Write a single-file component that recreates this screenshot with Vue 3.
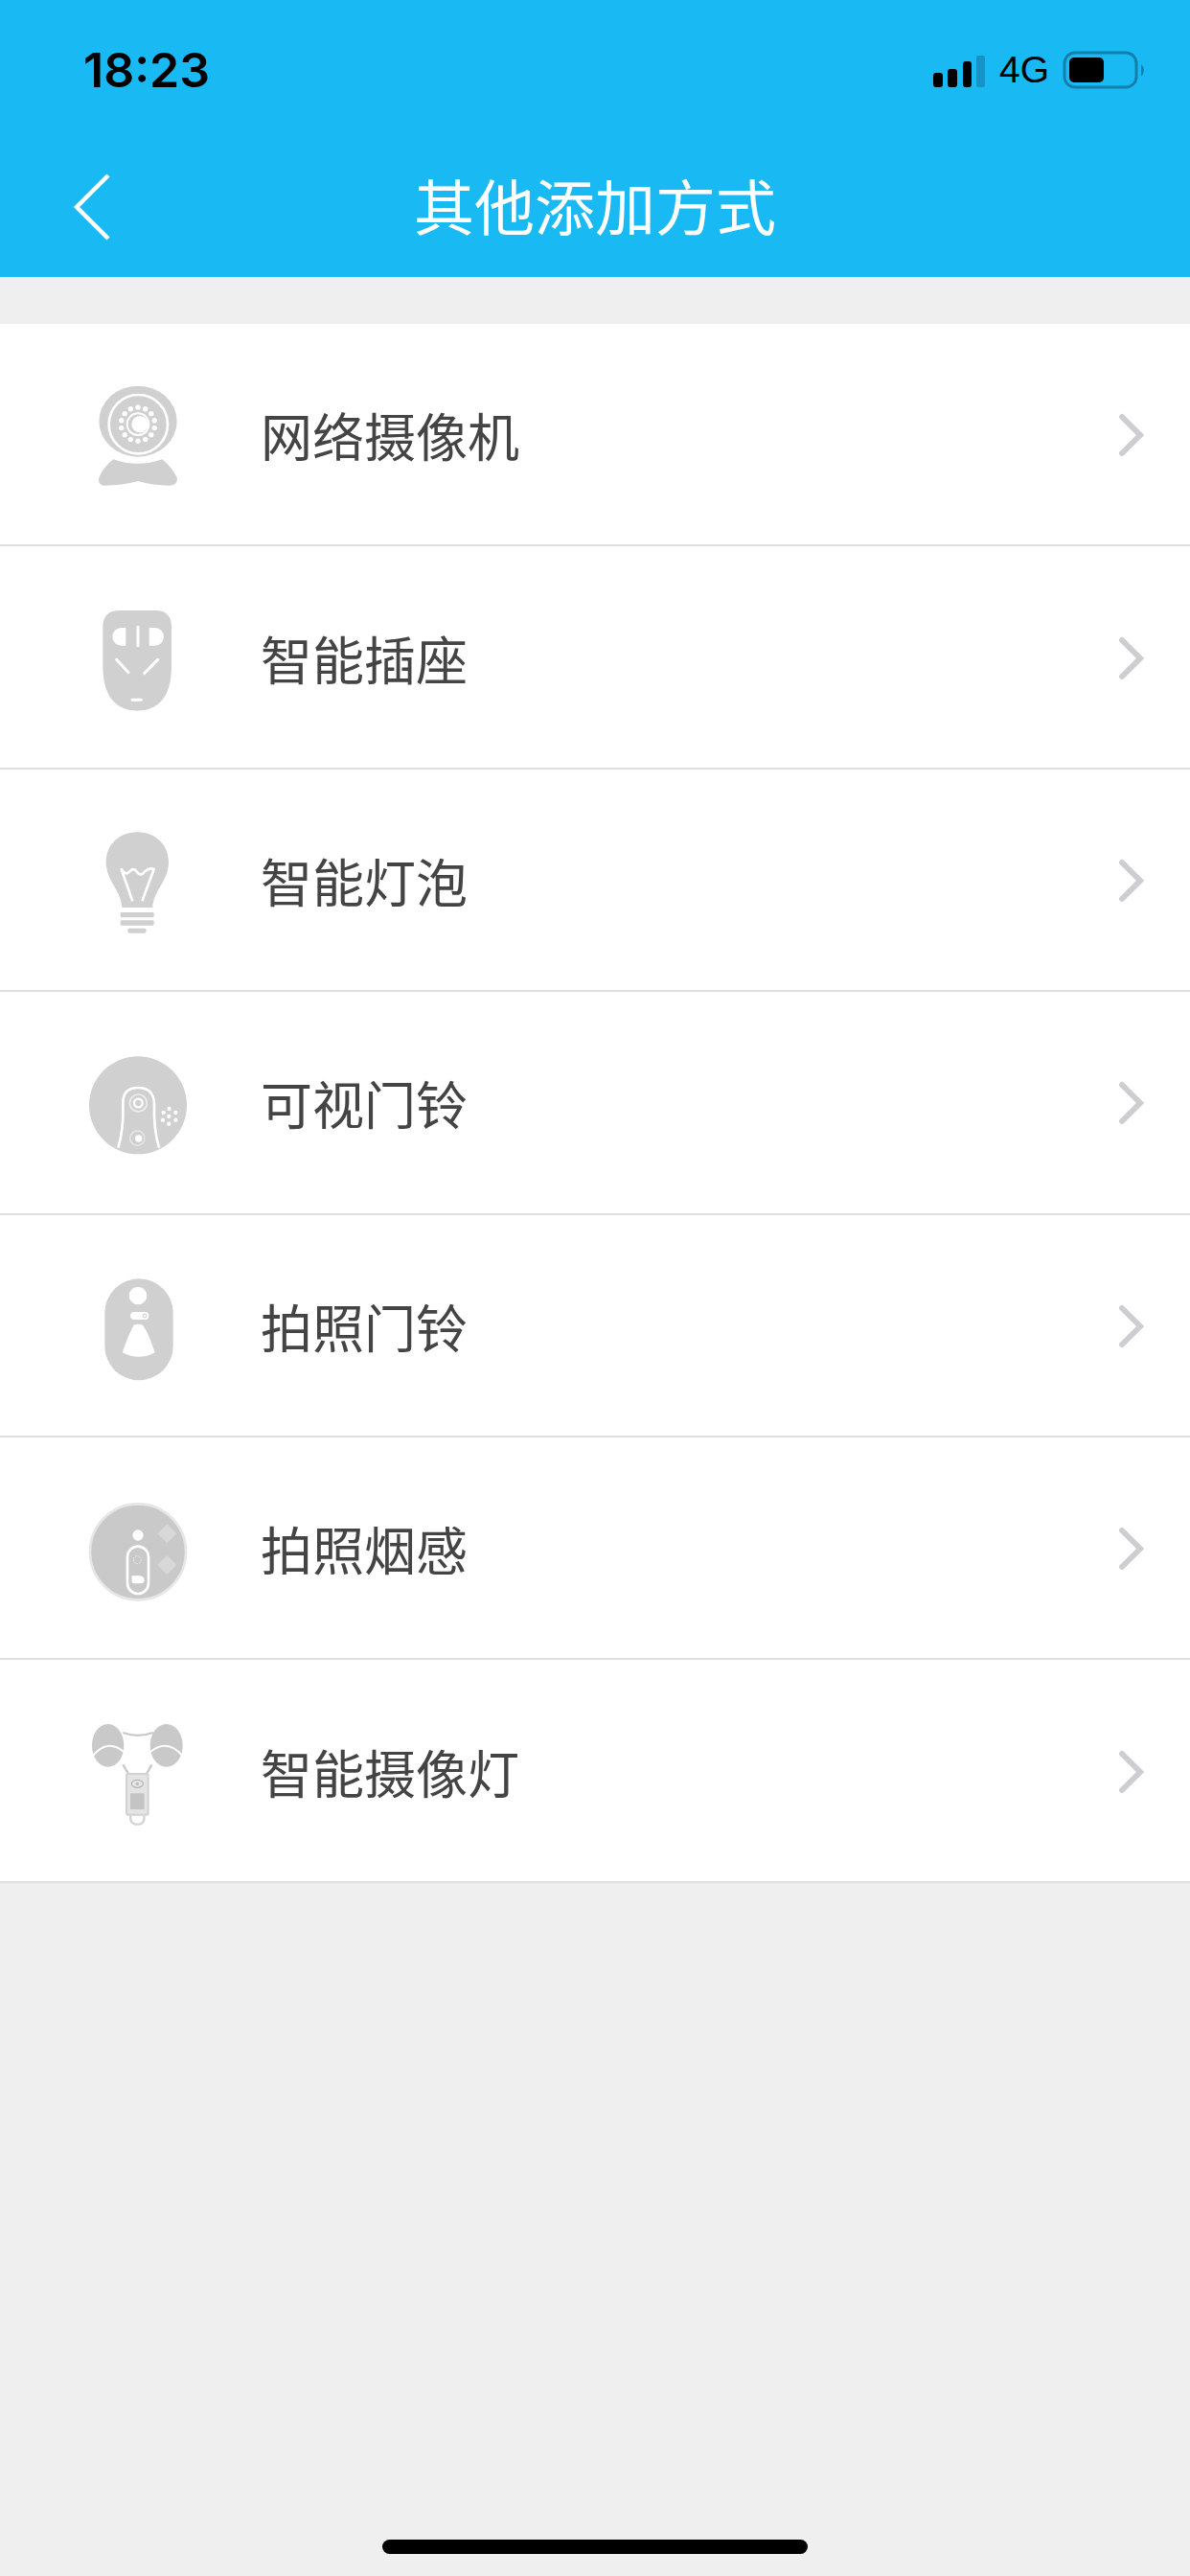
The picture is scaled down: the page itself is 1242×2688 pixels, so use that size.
<script setup>
const rows = [
  { name: '网络摄像机', box: '0 -18 480 480' },
  { name: '智能插座', box: '0 -12 480 480' },
  { name: '智能灯泡', box: '0 -6 480 480' },
  { name: '可视门铃', box: '0 0 480 480' },
  { name: '拍照门铃', box: '0 -9 480 480' },
  { name: '拍照烟感', box: '0 -3 480 480' },
  { name: '智能摄像灯', box: '0 -12 480 480' },
]
const cameraDots = Array.from({ length: 14 }, (_, i) => {
  const a = (i / 14) * Math.PI * 2 - Math.PI / 2
  return { x: 252 + Math.cos(a) * 53, y: 188 + Math.sin(a) * 53 }
})
const speakerDots = [
  [350, 258], [370, 270], [370, 293], [349, 305], [330, 293], [332, 270], [349, 282],
]
</script>

<template>
  <div class="page">
    <header class="header">
      <div class="status">
        <span class="time">18:23</span>
        <div class="status-right">
          <svg class="signal" width="54" height="33" viewBox="0 0 54 33">
            <rect x="0" y="18" width="10" height="15" rx="3" fill="#000" />
            <rect x="15" y="14" width="10" height="19" rx="3" fill="#000" />
            <rect x="31" y="6" width="9" height="27" rx="3" fill="#000" />
            <rect x="45" y="0" width="9" height="33" rx="2" fill="#1493c4" />
          </svg>
          <span class="net">4G</span>
          <svg class="battery" width="88" height="40" viewBox="0 0 88 40">
            <rect x="2" y="2" width="75" height="36" rx="11" fill="none" stroke="#1380ab" stroke-width="3" />
            <rect x="7" y="7" width="36" height="26" rx="5" fill="#000" />
            <path d="M82 14 Q88 20 82 27 Z" fill="#1380ab" />
          </svg>
        </div>
      </div>
      <div class="nav">
        <svg class="back" width="44" height="72" viewBox="0 0 44 72">
          <path d="M38 3 L5 36 L38 69" fill="none" stroke="#fff" stroke-width="4.5" />
        </svg>
        <h1 class="title">其他添加方式</h1>
      </div>
    </header>

    <ul class="list">
      <li v-for="(row, i) in rows" :key="row.name" class="row">
        <svg class="icon" width="160" height="160" :viewBox="row.box">
          <g v-if="i === 0">
            <ellipse cx="252" cy="179" rx="122" ry="111" fill="#d0d0d0" />
            <circle cx="253" cy="188" r="92" fill="none" stroke="#fff" stroke-width="8" />
            <circle v-for="(d, k) in cameraDots" :key="k" :cx="d.x" :cy="d.y" r="8" fill="#fff" />
            <circle cx="252" cy="188" r="37" fill="#fff" />
            <circle cx="252" cy="188" r="31" fill="#d0d0d0" />
            <circle cx="258" cy="188" r="26" fill="#fff" />
            <path d="M175 298 Q250 325 328 298 Q360 325 374 355 Q378 380 350 380 Q300 380 252 366 Q200 380 150 380 Q125 380 130 355 Q145 320 175 298Z" fill="#d0d0d0" />
          </g>
          <g v-else-if="i === 1">
            <path d="M190 78 H310 Q357 80 357 130 V250 Q357 390 250 392 Q142 390 142 250 V130 Q142 80 190 78Z" fill="#d0d0d0" />
            <path d="M214 132 H200 A28 28 0 0 0 200 188 H214 Z M287 132 H305 A28 28 0 0 1 305 188 H287 Z" fill="#fff" />
            <path d="M252 130 V188 M185 232 L222 272 M314 232 L272 275 M234 358 H262" fill="none" stroke="#fff" stroke-width="9" stroke-linecap="round" />
          </g>
          <g v-else-if="i === 2">
            <path d="M250 82 C310 82 348 125 348 175 C348 235 300 265 298 318 H202 C200 265 152 235 152 175 C152 125 190 82 250 82Z" fill="#d0d0d0" />
            <path d="M235 298 L200 198 Q215 220 226 205 Q238 190 250 208 Q262 222 274 205 Q288 192 302 198 L265 298" fill="none" stroke="#fff" stroke-width="8" stroke-linejoin="round" />
            <rect x="197" y="333" width="105" height="16" rx="4" fill="#d0d0d0" />
            <rect x="197" y="358" width="105" height="16" rx="4" fill="#d0d0d0" />
            <rect x="220" y="383" width="58" height="15" rx="6" fill="#d0d0d0" />
          </g>
          <g v-else-if="i === 3">
            <circle cx="252" cy="247" r="153" fill="#d0d0d0" />
            <path d="M190 380 Q208 320 205 240 Q205 192 252 192 Q300 192 303 240 Q300 320 318 380" fill="none" stroke="#fff" stroke-width="8" />
            <circle cx="253" cy="240" r="27" fill="none" stroke="#eee" stroke-width="5" />
            <circle cx="253" cy="240" r="13" fill="none" stroke="#fff" stroke-width="7" />
            <circle cx="250" cy="350" r="23" fill="none" stroke="#e8e8e8" stroke-width="4" />
            <circle cx="254" cy="351" r="11" fill="#fff" />
            <circle v-for="(d, k) in speakerDots" :key="k" :cx="d[0]" :cy="d[1]" r="6.5" fill="#fff" />
          </g>
          <g v-else-if="i === 4">
            <rect x="148" y="82" width="214" height="318" rx="107" fill="#d0d0d0" />
            <circle cx="252" cy="135" r="28" fill="#fff" />
            <rect x="228" y="186" width="58" height="24" rx="12" fill="#fff" />
            <circle cx="273" cy="198" r="6" fill="none" stroke="#c8c8c8" stroke-width="3" />
            <path d="M240 226 Q252 222 265 226 Q280 240 305 313 Q255 340 203 313 Q225 250 240 226Z" fill="#fff" />
          </g>
          <g v-else-if="i === 5">
            <circle cx="252" cy="247" r="150" fill="#c9c9c9" stroke="#e6e6e6" stroke-width="8" />
            <circle cx="252" cy="195" r="17" fill="#fff" />
            <rect x="219" y="230" width="66" height="148" rx="33" fill="none" stroke="#fff" stroke-width="8" />
            <circle cx="250" cy="272" r="12" fill="none" stroke="#eee" stroke-width="3" stroke-dasharray="5 3" />
            <path d="M232 322 H258 Q272 324 272 335 Q272 346 258 346 H240 Q233 346 233 338 Z" fill="#fff" />
            <path d="M343 160 L373 190 L343 220 L313 190 Z M343 258 L373 288 L343 318 L313 288 Z" fill="#d8d8d8" />
          </g>
          <g v-else>
            <path d="M205 105 Q250 122 300 105 M205 205 L226 240 M295 205 L276 240" fill="none" stroke="#c9c9c9" stroke-width="7" />
            <ellipse cx="158" cy="145" rx="50" ry="67" fill="#c9c9c9" />
            <ellipse cx="341" cy="145" rx="51" ry="67" fill="#c9c9c9" />
            <path d="M110 178 Q155 122 208 165 M291 165 Q345 122 392 178" fill="none" stroke="#fff" stroke-width="6" />
            <rect x="216" y="234" width="68" height="128" rx="6" fill="#e4e4e4" stroke="#d2d2d2" stroke-width="6" />
            <ellipse cx="250" cy="265" rx="18" ry="12" fill="#e8e8e8" stroke="#b8b8b8" stroke-width="4" />
            <circle cx="250" cy="265" r="5" fill="#b8b8b8" />
            <rect x="228" y="295" width="44" height="50" rx="2" fill="#c4c4c4" />
            <path d="M229 364 Q225 392 250 392 Q275 392 271 364" fill="none" stroke="#d4d4d4" stroke-width="7" />
          </g>
        </svg>
        <span class="label">{{ row.name }}</span>
        <svg class="chevron" width="28" height="46" viewBox="0 0 28 46">
          <path d="M4 4 L23 23 L4 42" fill="none" stroke="#cdcdd2" stroke-width="6" stroke-linecap="round" stroke-linejoin="miter" />
        </svg>
      </li>
    </ul>

    <div class="spacer">
      <div class="home-bar"></div>
    </div>
  </div>
</template>

<style scoped>
.page {
  width: 1242px;
  height: 2688px;
  display: flex;
  flex-direction: column;
  background: #efefef;
  font-family: "Noto Sans CJK SC", "Liberation Sans", sans-serif;
}
.header {
  height: 289px;
  flex: none;
  background: #19b9f4;
  display: flex;
  flex-direction: column;
}
.status {
  height: 140px;
  flex: none;
  padding: 53px 45px 0 87px;
  box-sizing: border-box;
  display: flex;
  justify-content: space-between;
  align-items: flex-start;
}
.time {
  font-family: Inter, "Liberation Sans", sans-serif;
  font-size: 50px;
  font-weight: 600;
  line-height: 40px;
  color: #000;
}
.status-right {
  display: flex;
  align-items: flex-start;
}
.signal {
  margin-top: 5px;
}
.net {
  margin-left: 15px;
  margin-right: 14px;
  font-family: "Liberation Sans", sans-serif;
  font-size: 39px;
  line-height: 40px;
  color: #000;
}
.nav {
  flex: 1;
  position: relative;
  display: flex;
  align-items: center;
  justify-content: center;
}
.back {
  position: absolute;
  left: 75px;
  top: 40px;
}
.title {
  margin: 0 0 5px;
  font-size: 63px;
  font-weight: 400;
  line-height: 1;
  color: #fff;
}
.list {
  list-style: none;
  margin: 49px 0 0;
  padding: 0;
  background: #fff;
}
.row {
  height: 232.4px;
  box-sizing: border-box;
  padding: 2px 47px 0 60px;
  display: flex;
  align-items: center;
  border-bottom: 2px solid #dedede;
}
.icon {
  flex: none;
  filter: blur(0.6px);
}
.label {
  margin-left: 52px;
  font-size: 54px;
  line-height: 1;
  color: #444;
}
.chevron {
  margin-left: auto;
  flex: none;
}
.spacer {
  flex: 1;
  display: flex;
  align-items: flex-end;
  justify-content: center;
  padding-bottom: 23px;
}
.home-bar {
  width: 444px;
  height: 15px;
  border-radius: 8px;
  background: #000;
}
</style>
